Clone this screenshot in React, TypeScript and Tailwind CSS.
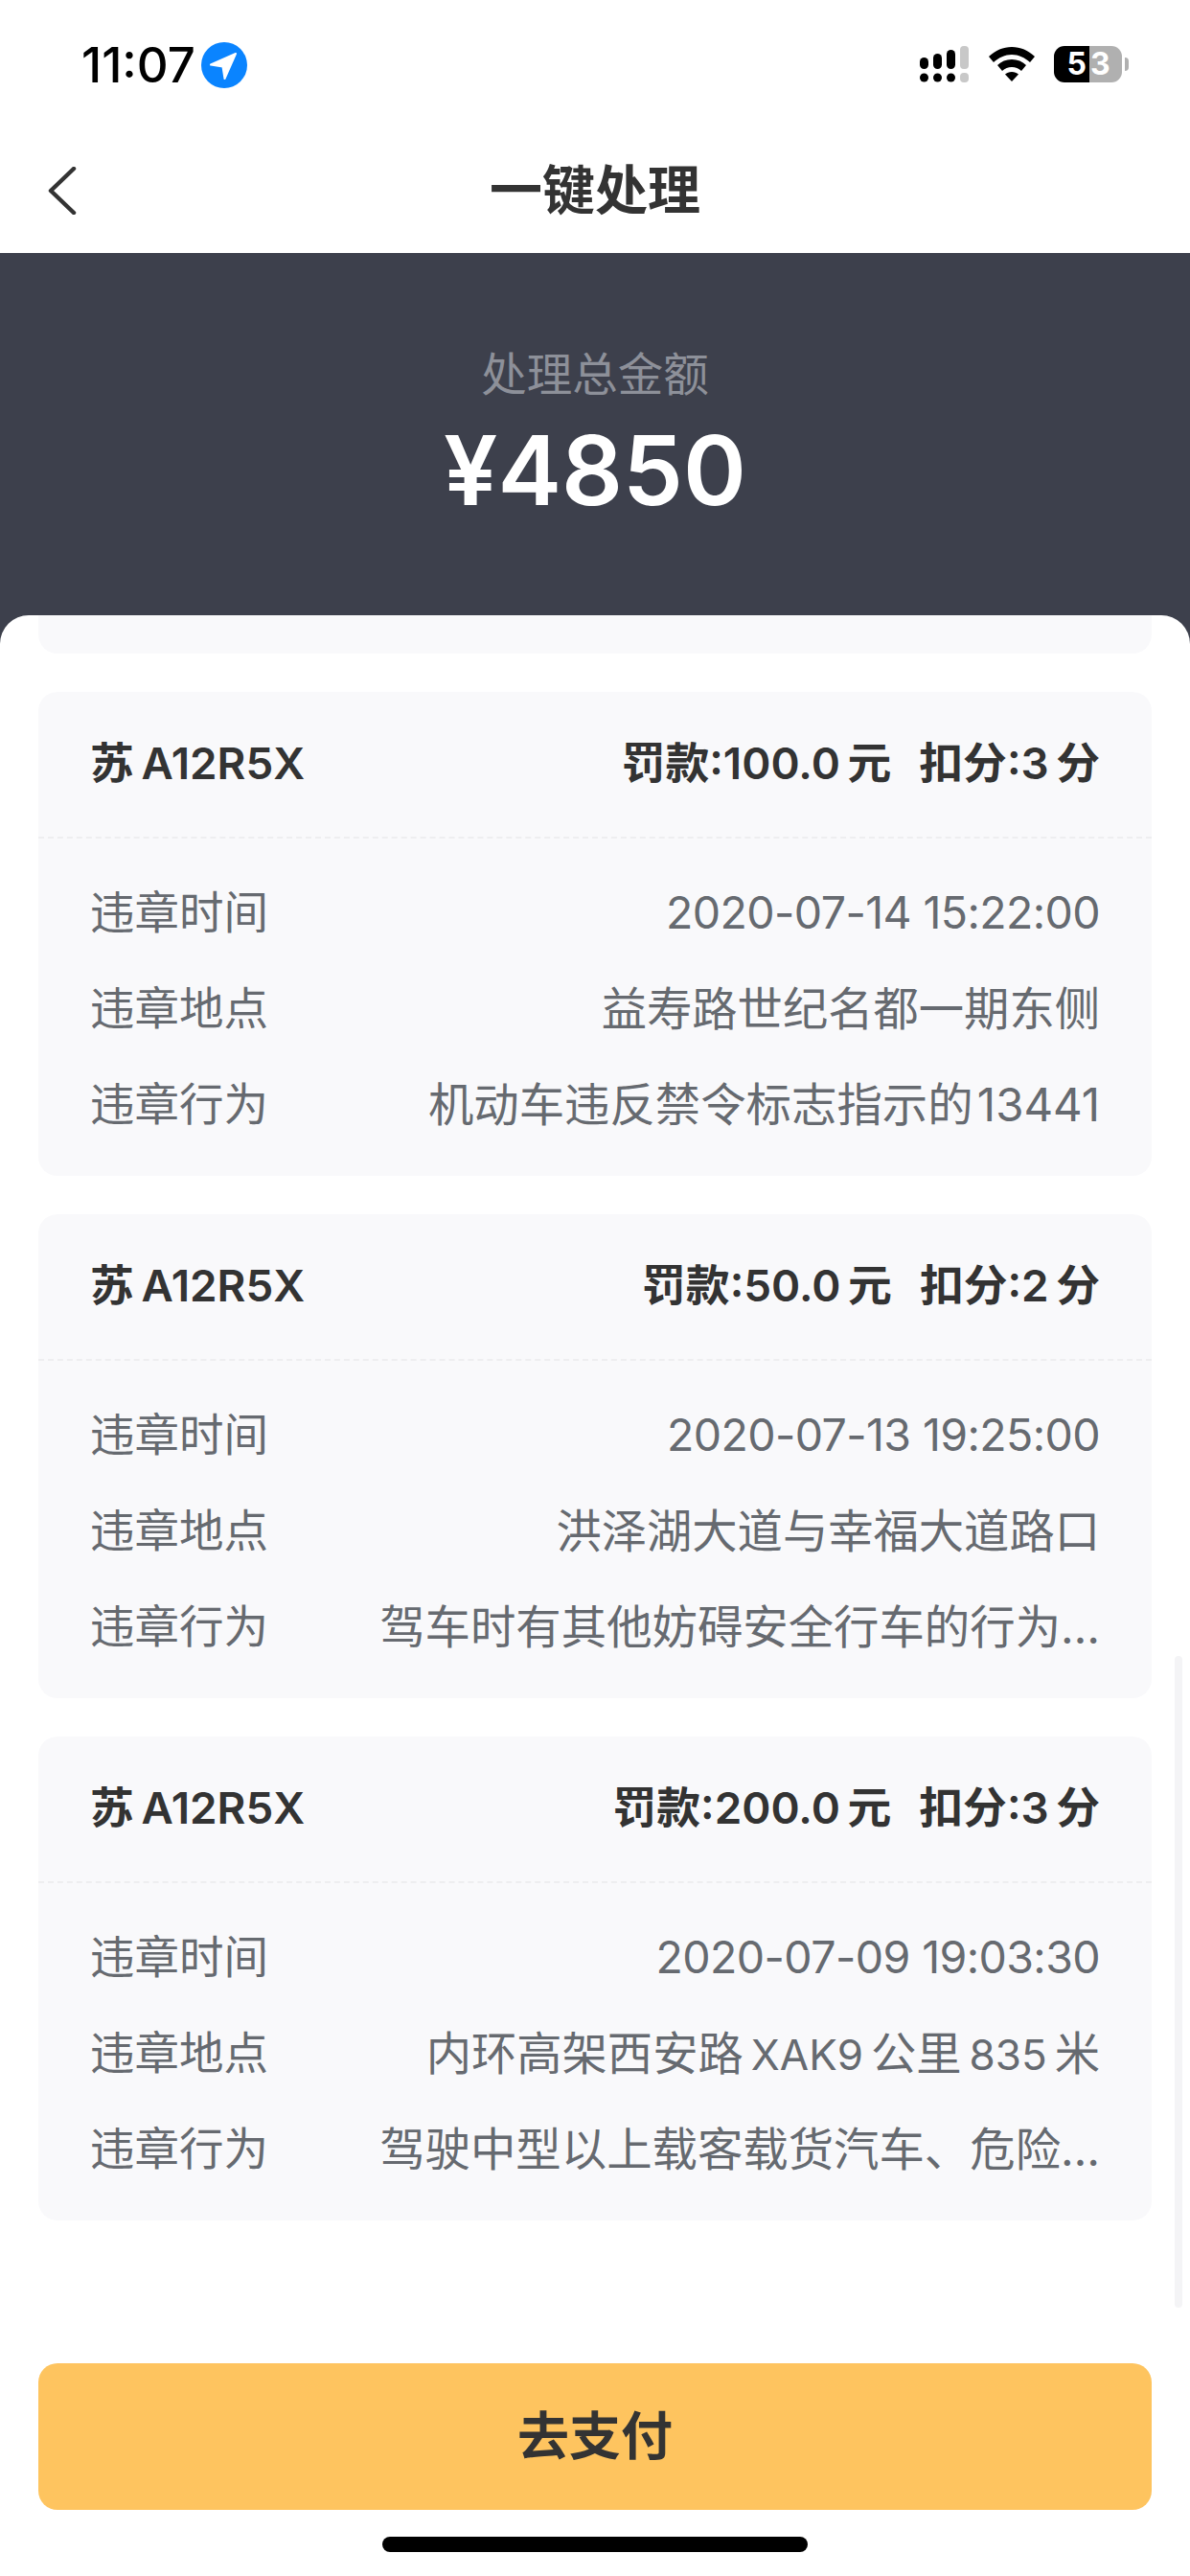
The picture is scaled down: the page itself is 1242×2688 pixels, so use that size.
import type { ReactNode } from "react";

const cards: {
  plate: string;
  fine: string;
  points: string;
  time: string;
  place: ReactNode;
  act: string;
}[] = [
  {
    plate: "苏\u2009A12R5X",
    fine: "罚款:100.0\u2009元",
    points: "扣分:3\u2009分",
    time: "2020-07-14 15:22:00",
    place: "益寿路世纪名都一期东侧",
    act: "机动车违反禁令标志指示的\u200A13441",
  },
  {
    plate: "苏\u2009A12R5X",
    fine: "罚款:50.0\u2009元",
    points: "扣分:2\u2009分",
    time: "2020-07-13 19:25:00",
    place: "洪泽湖大道与幸福大道路口",
    act: "驾车时有其他妨碍安全行车的行为…",
  },
  {
    plate: "苏\u2009A12R5X",
    fine: "罚款:200.0\u2009元",
    points: "扣分:3\u2009分",
    time: "2020-07-09 19:03:30",
    place: (
      <>
        内环高架西安路<span className="text-[44px]">{"\u2009XAK9\u2009"}</span>公里
        <span className="text-[44px]">{"\u2009835\u2009"}</span>米
      </>
    ),
    act: "驾驶中型以上载客载货汽车、危险…",
  },
];

function Row({ label, children }: { label: string; children: ReactNode }) {
  return (
    <div className="flex h-[100px] items-center justify-between">
      <span className="shrink-0 text-[46.500px] text-[#666a70]">{label}</span>
      {children}
    </div>
  );
}

function StatusBar() {
  return (
    <div className="flex h-[132px] items-start justify-between pl-[85px] pr-[64px] pt-[39px]">
      <div className="flex items-center gap-[6px]">
        <span className="text-[51px] font-medium leading-[58px] text-black">11:07</span>
        <svg viewBox="0 0 48 48" className="h-[48px] w-[48px]">
          <circle cx="24" cy="24" r="24" fill="#0a84ff" />
          <path d="M36 12 L10 23.5 L22.5 25.5 L24.5 38 Z" fill="#fff" stroke="#fff" strokeWidth="2" strokeLinejoin="round" />
        </svg>
      </div>
      <div className="flex items-center pt-[9px]">
        <svg viewBox="0 0 52 38" className="h-[38px] w-[52px]">
          <rect x="0" y="12" width="9" height="12" rx="4.5" fill="#000" />
          <rect x="14" y="8" width="9" height="16" rx="4.5" fill="#000" />
          <rect x="28" y="4" width="9" height="20" rx="4.5" fill="#000" />
          <rect x="42" y="0" width="9" height="24" rx="4" fill="#c8c8c8" />
          <circle cx="4.5" cy="33" r="4.5" fill="#000" />
          <circle cx="18.5" cy="33" r="4.5" fill="#000" />
          <circle cx="32.5" cy="33" r="4.5" fill="#000" />
          <rect x="42" y="28" width="9" height="10" rx="4" fill="#c8c8c8" />
        </svg>
        <svg viewBox="0 0 48 36" className="ml-[20px] h-[36px] w-[48px]">
          <path d="M24 0C15 0 7 3.5 0 10l5 6c5.500-5 12-8 19-8s13.500 3 19 8l5-6C41 3.500 33 0 24 0Z" fill="#000" />
          <path d="M24 13c-6 0-11 2-15 6l5 6c3-2.500 6-4 10-4s7 1.500 10 4l5-6c-4-4-9-6-15-6Z" fill="#000" />
          <path d="M24 26c-3 0-5 1-7 2.500L24 36l7-7.500C29 27 27 26 24 26Z" fill="#000" />
        </svg>
        <div className="ml-[20px] flex items-center gap-[3px]">
          <div className="flex h-[38px] w-[71px] overflow-hidden rounded-[11px]">
            <div className="flex w-[37px] items-center justify-end bg-black pr-[3px] text-[32px] font-bold leading-none text-white">5</div>
            <div className="flex w-[34px] items-center justify-start bg-[#b0b0b0] pl-[1px] text-[32px] font-bold leading-none text-white">3</div>
          </div>
          <div className="h-[14px] w-[4px] rounded-r-full bg-[#b0b0b0]" />
        </div>
      </div>
    </div>
  );
}

export default function App() {
  return (
    <div
      className="relative flex h-[2688px] w-[1242px] flex-col overflow-hidden bg-white"
      style={{ fontFamily: '"Inter", "Noto Sans CJK SC", sans-serif' }}
    >
      <StatusBar />

      {/* NAV */}
      <div className="relative flex h-[132px] items-center justify-center">
        <svg viewBox="0 0 30 50" className="absolute left-[50px] top-[42px] h-[50px] w-[30px]" fill="none">
          <path d="M27 2 L3 25 L27 48" stroke="#333" strokeWidth="4.500" strokeLinecap="round" strokeLinejoin="round" />
        </svg>
        <span className="text-[55px] font-semibold text-[#333]">一键处理</span>
      </div>

      {/* SUMMARY */}
      <div className="flex h-[378px] flex-col items-center bg-[#3d404c] pt-[99px]">
        <span className="text-[47.500px] leading-[56px] text-[#8d9099]">处理总金额</span>
        <span className="mt-[17px] text-[100px] font-[560] leading-[110px] text-white">¥4850</span>
      </div>

      {/* SHEET */}
      <div className="flex flex-1 flex-col bg-[#3d404c]">
        <div className="flex flex-1 flex-col rounded-t-[30px] bg-white px-[40px]">
          <div className="h-[40px] rounded-b-[20px] bg-[#f9f9fb]" />
          <div className="mt-[40px] flex flex-col gap-[40px]">
            {cards.map((card, i) => (
              <div key={i} className="h-[505px] rounded-[20px] bg-[#f9f9fb]">
                <div className="flex h-[153px] items-center justify-between border-b-2 border-dashed border-[#eeeef0] px-[54px]">
                  <span className="text-[45.800px] font-semibold text-[#333]">{card.plate}</span>
                  <div className="flex gap-[29px] text-[45.800px] font-semibold text-[#333]">
                    <span>{card.fine}</span>
                    <span>{card.points}</span>
                  </div>
                </div>
                <div className="px-[54px] pt-[28px]">
                  <Row label="违章时间">
                    <span className="whitespace-nowrap text-[46.500px] tracking-[-0.6px] text-[#666a70]">{card.time}</span>
                  </Row>
                  <Row label="违章地点">
                    <span className="whitespace-nowrap text-[47.300px] text-[#666a70]">{card.place}</span>
                  </Row>
                  <Row label="违章行为">
                    <span className="whitespace-nowrap text-[47.400px] text-[#666a70]">{card.act}</span>
                  </Row>
                </div>
              </div>
            ))}
          </div>

          <div className="mt-[149px] flex h-[153px] items-center justify-center rounded-[20px] bg-[#fec45f] text-[54px] font-semibold text-[#333]">
            去支付
          </div>
          <div className="mt-[28px] flex justify-center">
            <div className="h-[16px] w-[444px] rounded-full bg-black" />
          </div>
        </div>
      </div>

      {/* SCROLLBAR */}
      <div className="absolute left-[1226px] top-[1728px] h-[680px] w-[8px] rounded-full bg-[#f4f4f6]" />
    </div>
  );
}
